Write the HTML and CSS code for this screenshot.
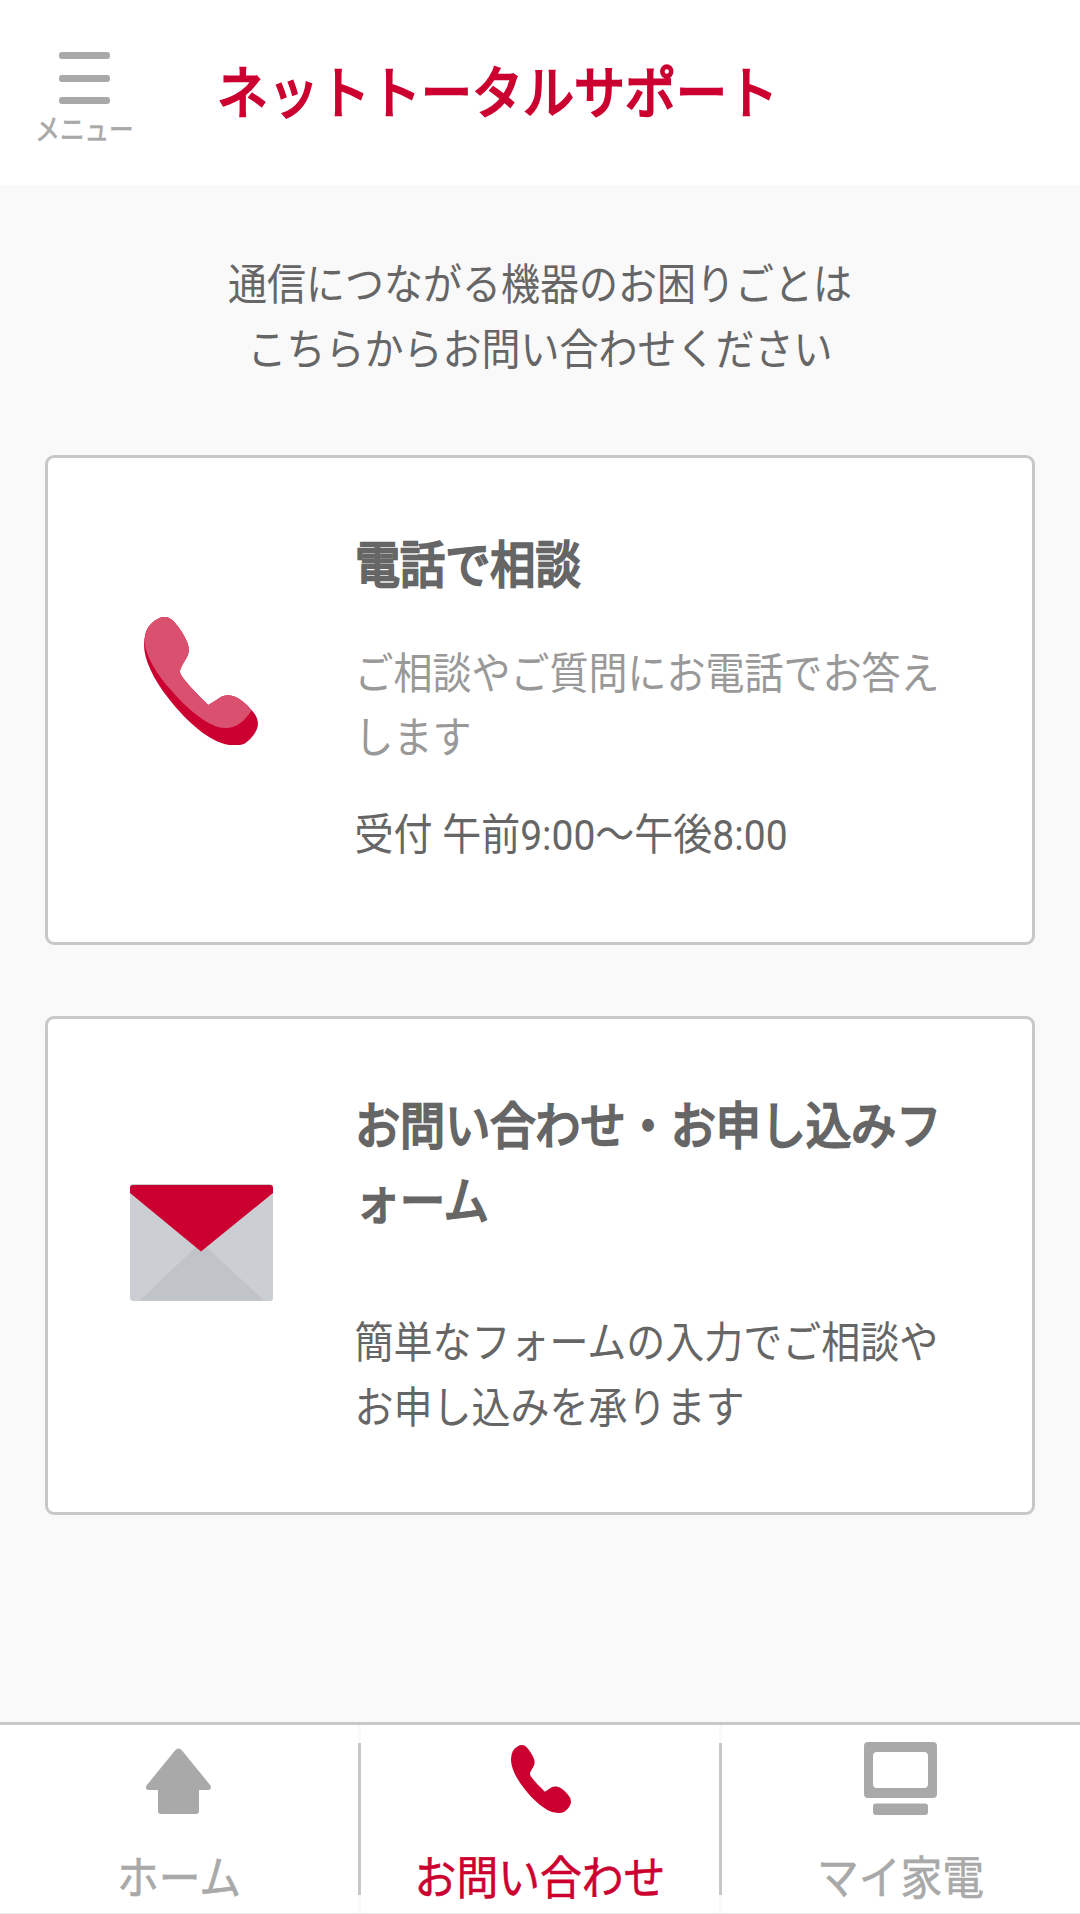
FILE: index.html
```html
<!DOCTYPE html>
<html lang="ja">
<head>
  <meta charset="UTF-8">
  <title>ネットトータルサポート</title>
  <link rel="stylesheet" href="styles.css">
</head>
<body>

<header class="header">
  <div class="menu">
    <span class="bar"></span>
    <span class="bar"></span>
    <span class="bar"></span>
    <span class="menu-label">メニュー</span>
  </div>
  <h1>ネットトータルサポート</h1>
</header>

<main>
  <p class="intro">通信につながる機器のお困りごとは<br>こちらからお問い合わせください</p>

  <section class="card card-tel">
    <div class="card-icon">
      <svg width="114" height="128.5" viewBox="0 0 342 385">
        <path fill="#cc0030" d="M60 0C72 -1 82 5 92 16C108 34 122 56 130 76Q138 98 132 113C126 128 114 142 109 157Q106 164 111 174C128 200 168 240 193 264C206 256 219 247 232 239Q242 233 260 235C285 240 308 260 325 282Q345 302 341 328C336 350 316 371 302 379Q286 387 258 384C196 377 125 310 75 246C28 186 0 128 0 82Q1 52 10 35C22 16 42 1 60 0Z"/>
        <path fill="#da506f" d="M60 0C72 -1 82 5 92 16C108 34 122 56 130 76Q138 98 132 113C126 128 114 142 109 157Q106 164 111 174C128 200 168 240 193 264C206 256 219 247 232 239Q242 233 260 235C285 240 308 260 323 280C302 310 278 334 243 333C196 333 130 277 78 216C38 170 8 122 1 76Q2 52 10 35C22 16 42 1 60 0Z"/>
      </svg>
    </div>
    <div class="card-text">
      <h2>電話で相談</h2>
      <p class="note">ご相談やご質問にお電話でお答えします</p>
      <p class="hours">受付 午前9:00～午後8:00</p>
    </div>
  </section>

  <section class="card card-form">
    <div class="card-icon">
      <svg width="143" height="117" viewBox="0 0 143 117">
        <rect width="143" height="117" rx="3" fill="#cbced3"/>
        <path fill="#c0c3c8" d="M10 116.500L71 58L134 116.500Z"/>
        <path fill="#cc0030" d="M3 1H140Q143 1 143 4V9L71 67.500L0 9V4Q0 1 3 1Z"/>
      </svg>
    </div>
    <div class="card-text">
      <h2>お問い合わせ・お申し込みフォーム</h2>
      <p>簡単なフォームの入力でご相談やお申し込みを承ります</p>
    </div>
  </section>
</main>

<nav class="tabs">
  <a class="tab">
    <svg width="73" height="74" viewBox="0 0 73 74">
      <path fill="#a9a9a9" d="M32 8.500Q35.500 4.500 39 8.500L67.500 43.500Q69 48 65 48H56V69Q56 72 53 72H18Q15 72 15 69V48H6Q1.500 48 3.500 43.500Z"/>
    </svg>
    <span>ホーム</span>
  </a>
  <a class="tab active">
    <svg class="tab-tel" width="60" height="68" viewBox="0 0 342 385" preserveAspectRatio="none">
      <path fill="#cc0030" d="M60 0C72 -1 82 5 92 16C108 34 122 56 130 76Q138 98 132 113C126 128 114 142 109 157Q106 164 111 174C128 200 168 240 193 264C206 256 219 247 232 239Q242 233 260 235C285 240 308 260 325 282Q345 302 341 328C336 350 316 371 302 379Q286 387 258 384C196 377 125 310 75 246C28 186 0 128 0 82Q1 52 10 35C22 16 42 1 60 0Z"/>
    </svg>
    <span>お問い合わせ</span>
  </a>
  <a class="tab">
    <svg width="73" height="74" viewBox="0 0 73 74">
      <path fill="#a9a9a9" fill-rule="evenodd" d="M4 0H69Q73 0 73 4V52Q73 56 69 56H4Q0 56 0 52V4Q0 0 4 0ZM13 10Q9 10 9 14V42Q9 46 13 46H60Q64 46 64 42V14Q64 10 60 10Z"/>
      <rect x="9" y="61.500" width="55" height="11.500" rx="3" fill="#a9a9a9"/>
    </svg>
    <span>マイ家電</span>
  </a>
</nav>

</body>
</html>
```
FILE: styles.css
```css
* {
  box-sizing: border-box;
}
body {
  --tall: scaleY(1.1);
  margin: 0;
  height: 1914px;
  display: flex;
  flex-direction: column;
  background: #f9f9f9;
  color: #666;
  font-family: Roboto, "Noto Sans CJK JP", sans-serif;
  font-size: 39px;
  line-height: 59.1px;
}
h1, h2, p {
  margin: 0;
  font-weight: 400;
}
svg {
  display: block;
}

.header {
  height: 185px;
  display: flex;
  background: #fff;
}
.menu {
  width: 169px;
  padding-top: 52px;
  display: flex;
  flex-direction: column;
  align-items: center;
  color: #a9a9a9;
}
.bar {
  width: 51px;
  height: 7px;
  margin-bottom: 15.6px;
  border-radius: 3px;
  background: #a9a9a9;
}
.menu-label {
  margin-top: -5px;
  font-size: 24.6px;
  line-height: 30px;
  -webkit-text-stroke: 0.6px #a9a9a9;
  transform: scaleY(1.2);
}
h1 {
  margin: 65px 0 0 48px;
  height: 58px;
  color: #cc0030;
  font-size: 51px;
  line-height: 58px;
  white-space: nowrap;
  -webkit-text-stroke: 2.2px #cc0030;
  transform: var(--tall);
}

main {
  flex: 1;
  padding: 0 45px;
}
.intro {
  margin: 75px 0 76.8px;
  text-align: center;
  transform: var(--tall);
}
.card {
  display: flex;
  height: 490px;
  border: 3px solid #c8c8c8;
  border-radius: 9px;
  background: #fff;
}
.card-form {
  height: 499px;
  margin-top: 71px;
}
.card-icon {
  width: 307px;
  padding: 159px 0 0 96px;
}
.card-form .card-icon {
  padding: 165px 0 0 82px;
}
.card-text {
  width: 588px;
  margin-top: 71.5px;
  transform: var(--tall);
  transform-origin: top;
  line-break: anywhere;
}
.card-form .card-text {
  margin-top: 71px;
}
h2 {
  font-size: 45.1px;
  line-height: 68.2px;
  -webkit-text-stroke: 2.2px #666;
}
.note {
  margin-top: 34.5px;
  color: #999;
}
.hours {
  margin-top: 29px;
}
.card-form p {
  margin-top: 65.5px;
}
.card p {
  margin-left: -0.5px;
}

.tabs {
  height: 192px;
  display: grid;
  grid-template-columns: 361px 361px 358px;
  border-top: 3px solid #c8c8c8;
  border-bottom: 1px solid #e8e8e8;
  background: #fff;
}
.tab {
  display: flex;
  flex-direction: column;
  align-items: center;
  padding: 17px 3px 0 0;
  color: #a9a9a9;
  font-size: 41.8px;
  /* short divider between tabs, with a faint full height line under it */
  background:
    linear-gradient(#c8c8c8, #c8c8c8) right 18px / 3px 152px no-repeat,
    linear-gradient(#f9f9f9, #f9f9f9) right 0 / 3px 100% no-repeat;
}
.tab:last-child {
  padding-right: 1px;
  background: none;
}
.tab span {
  margin-top: 33px;
  -webkit-text-stroke: 0.5px;
  transform: var(--tall);
}
.tab-tel {
  margin: 3px 0 3px 2px;
}
.active {
  color: #cc0030;
}
```
